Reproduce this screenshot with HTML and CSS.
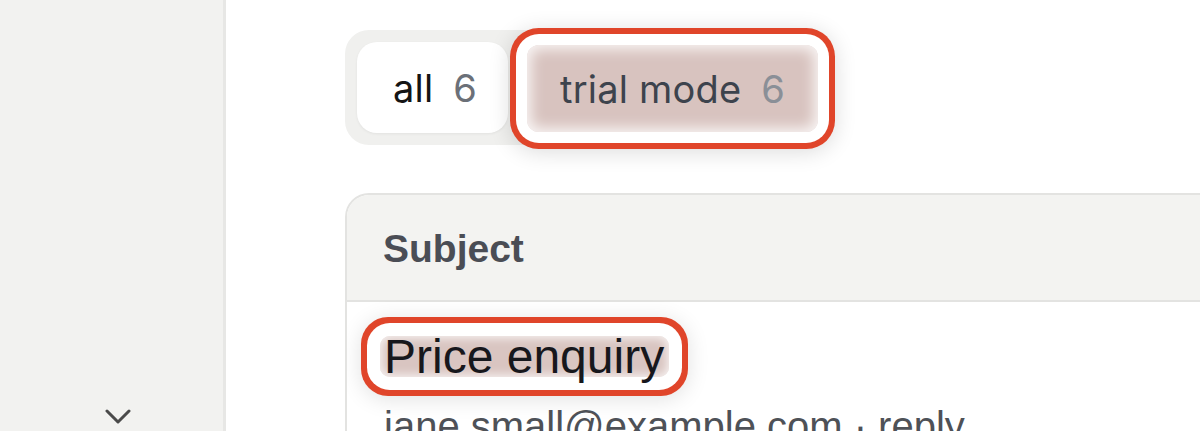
FILE: index.html
```html
<!DOCTYPE html>
<html>
<head>
<meta charset="utf-8">
<link rel="stylesheet" href="styles.css">
</head>
<body>
<div class="app">
  <aside class="sidebar">
    <svg class="chevron" width="26" height="18" viewBox="0 0 26 18"><path d="M2 3 L13 14 L24 3" fill="none" stroke="#4a4a4a" stroke-width="3" stroke-linecap="round" stroke-linejoin="round"/></svg>
  </aside>
  <main class="main">
    <div class="tabs">
      <button class="tab tab-active"><span class="tab-label">all</span><span class="tab-count">6</span></button>
      <button class="tab tab-highlight"><span class="tab-label">trial mode</span><span class="tab-count">6</span></button>
    </div>
    <section class="card">
      <div class="card-head">Subject</div>
      <div class="row">
        <div class="subject"><span class="subject-mark">Price enquiry</span></div>
        <div class="meta">jane.small@example.com · reply</div>
      </div>
    </section>
  </main>
</div>
</body>
</html>
```
FILE: styles.css
```css
* { box-sizing: border-box; }
html, body { margin: 0; padding: 0; }
body {
  width: 1200px;
  height: 431px;
  overflow: hidden;
  background: #fff;
  font-family: Inter, "Liberation Sans", sans-serif;
}
.app {
  display: flex;
  height: 431px;
}
.sidebar {
  width: 226px;
  flex: none;
  background: #f2f2f0;
  border-right: 3px solid #e7e7e5;
  display: flex;
  flex-direction: column;
  justify-content: flex-end;
  align-items: center;
  padding-bottom: 5px;
}
.chevron { display: block; margin-left: 12px; }
.main {
  flex: 1;
  padding: 30px 0 0 119px;
  min-width: 0;
}
.tabs {
  display: inline-flex;
  gap: 19px;
  padding: 12px;
  background: #f0f0ee;
  border-radius: 24px;
}
.tab {
  border: none;
  font-family: inherit;
  font-size: 38px;
  height: 91px;
  display: flex;
  align-items: center;
  gap: 20px;
  border-radius: 20px;
  cursor: pointer;
  background: transparent;
  letter-spacing: 0.2px;
}
.tab-active {
  background: #fff;
  padding: 0 30px 0 36px;
  width: 151px;
  box-shadow: 0 1px 3px rgba(0,0,0,0.06);
}
.tab-active .tab-label { color: #141414; }
.tab-active .tab-count { color: #6b7078; }
.tab-highlight {
  position: relative;
  z-index: 1;
  width: 291px;
  height: 87px;
  margin-top: 3px;
  padding: 0 30px 0 33px;
  background: #d8c3bf;
  border-radius: 12px;
  box-shadow: inset 0 0 14px 4px rgba(255,255,255,0.85),
              0 0 0 11px #fff,
              0 0 0 17px #e0452a,
              0 3px 22px 17px rgba(0,0,0,0.14);
}
.tab-highlight .tab-label { color: #3d434d; }
.tab-highlight .tab-count { color: #8a8f97; }
.card {
  margin-top: 48px;
  border: 2px solid #e3e3e1;
  border-right: none;
  border-radius: 24px 0 0 0;
  overflow: hidden;
}
.card-head {
  background: #f3f3f1;
  height: 107px;
  border-bottom: 2px solid #e3e3e1;
  padding: 32px 0 0 36px;
  font-family: "Liberation Sans", Arial, sans-serif;
  font-weight: 700;
  font-size: 39px;
  line-height: 1.15;
  color: #4a4d55;
}
.row {
  padding: 34px 0 0 37px;
  background: #fff;
}
.subject {
  display: flex;
}
.subject-mark {
  font-family: "Liberation Sans", Arial, sans-serif;
  font-size: 48px;
  line-height: 41px;
  color: #17171c;
  background: #d9c5c1;
  padding: 0 5px 0 4px;
  margin-left: -4px;
  border-radius: 10px;
  box-shadow: inset 0 0 10px 2px rgba(255,255,255,0.8),
              0 0 0 13px #fff,
              0 0 0 19px #e0452a,
              0 3px 22px 19px rgba(0,0,0,0.12);
}
.meta {
  margin-top: 26px;
  font-family: "Liberation Sans", Arial, sans-serif;
  font-size: 40px;
  line-height: 1.15;
  color: #4e5157;
  white-space: nowrap;
}
```
